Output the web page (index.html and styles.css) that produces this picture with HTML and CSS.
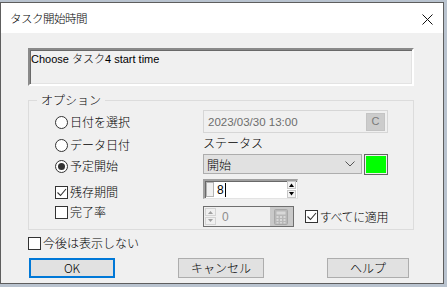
FILE: index.html
```html
<!DOCTYPE html>
<html lang="ja">
<head>
  <meta charset="UTF-8" />
  <title>タスク開始時間</title>
  <link rel="stylesheet" href="styles.css">
</head>
<body>

  <div class="window">
    <div class="titlebar">
      <span class="title">タスク開始時間</span>
      <svg class="close" width="11" height="11" viewBox="0 0 11 11">
        <path d="M0.5 0.5 L10.5 10.5 M10.5 0.5 L0.5 10.5" stroke="#111" stroke-width="1" fill="none" />
      </svg>
    </div>

    <div class="content">
      <div class="message">Choose タスク4 start time</div>

      <div class="group">
        <span class="legend">オプション</span>

        <div class="col-left">
          <div class="opt r1"><span class="radio"></span>日付を選択</div>
          <div class="opt r2"><span class="radio"></span>データ日付</div>
          <div class="opt r3"><span class="radio checked"></span>予定開始</div>
          <div class="opt r4">
            <span class="check">
              <svg width="11" height="11" viewBox="0 0 11 11"><path d="M1.5 5.5 L4.5 8.5 L10 2" stroke="#333" stroke-width="1.1" fill="none" /></svg>
            </span>残存期間
          </div>
          <div class="opt r5"><span class="check"></span>完了率</div>
        </div>

        <div class="col-right">
          <div class="date-field">
            <span class="date-text">2023/03/30 13:00</span>
            <span class="date-btn">C</span>
          </div>

          <div class="status-label">ステータス</div>

          <div class="status-row">
            <div class="select">
              <span>開始</span>
              <svg width="10" height="6" viewBox="0 0 10 6"><path d="M0.5 0.5 L5 5 L9.5 0.5" stroke="#555" fill="none" /></svg>
            </div>
            <div class="swatch"><div class="swatch-fill"></div></div>
          </div>

          <div class="spin">
            <span class="spin-handle"></span>
            <span class="spin-value">8<span class="caret"></span></span>
            <span class="spin-arrows">
              <svg width="9" height="17" viewBox="0 0 9 17">
                <rect x="0.5" y="0.5" width="8" height="7" fill="#f4f4f4" stroke="#c8c8c8" />
                <rect x="0.5" y="9.5" width="8" height="7" fill="#f4f4f4" stroke="#c8c8c8" />
                <path d="M2 6 L4.5 2.5 L7 6 Z" fill="#000" />
                <path d="M2 11 L4.5 14.5 L7 11 Z" fill="#000" />
              </svg>
            </span>
          </div>

          <div class="last-row">
            <div class="spin disabled">
              <span class="mini-arrows">
                <svg width="11" height="17" viewBox="0 0 11 17">
                  <rect x="0.5" y="0.5" width="10" height="7" fill="#f0f0f0" stroke="#d4d4d4" />
                  <rect x="0.5" y="9.5" width="10" height="7" fill="#f0f0f0" stroke="#d4d4d4" />
                  <path d="M3 6 L5.5 3 L8 6 Z" fill="#a0a0a0" />
                  <path d="M3 11 L5.5 14 L8 11 Z" fill="#a0a0a0" />
                </svg>
              </span>
              <span class="spin-value grey">0</span>
              <span class="calc">
                <svg width="14" height="16" viewBox="0 0 14 16">
                  <rect x="0.5" y="0.5" width="13" height="15" rx="1" fill="#b8b8b8" stroke="#a8a8a8" />
                  <rect x="2.5" y="2.5" width="9" height="3" fill="#d8d8d8" />
                  <g fill="#d8d8d8">
                    <rect x="2.5" y="7" width="2" height="2" /><rect x="6" y="7" width="2" height="2" /><rect x="9.5" y="7" width="2" height="2" />
                    <rect x="2.5" y="10" width="2" height="2" /><rect x="6" y="10" width="2" height="2" /><rect x="9.5" y="10" width="2" height="2" />
                    <rect x="2.5" y="13" width="2" height="1.5" /><rect x="6" y="13" width="2" height="1.5" /><rect x="9.5" y="13" width="2" height="1.5" />
                  </g>
                </svg>
              </span>
            </div>
            <div class="opt apply">
              <span class="check">
                <svg width="11" height="11" viewBox="0 0 11 11"><path d="M1.5 5.5 L4.5 8.5 L10 2" stroke="#333" stroke-width="1.1" fill="none" /></svg>
              </span>すべてに適用
            </div>
          </div>
        </div>
      </div>

      <div class="opt dont-show"><span class="check"></span>今後は表示しない</div>

      <div class="buttons">
        <button class="btn default">OK</button>
        <button class="btn">キャンセル</button>
        <button class="btn help">ヘルプ</button>
      </div>
    </div>
  </div>

</body>
</html>
```

FILE: styles.css
```css
* {
  box-sizing: border-box;
}

body {
  margin: 0;
  background-color: #b9c3cf;
  font-family: "Noto Sans CJK JP", sans-serif;
  font-size: 12px;
  font-weight: 300;
  color: #000;
  height: 287px;
  overflow: hidden;
}

.window {
  margin-top: 2px;
  width: 444px;
  height: 282px;
  border: 1px solid #5e5e5e;
  background-color: #f0f0f0;
}

.titlebar {
  height: 30px;
  background-color: #fff;
  display: flex;
  align-items: center;
  justify-content: space-between;
  padding: 0 10px 0 9px;
}

.title {
  font-size: 11.5px;
  color: #000;
  letter-spacing: -0.5px;
}

.close {
  margin-top: 2px;
}

.content {
  padding: 15px 0 0 27px;
}

.message {
  width: 386px;
  height: 38px;
  border-top: 2px solid #8a8a8a;
  border-left: 2px solid #8a8a8a;
  border-right: 2px solid #fff;
  border-bottom: 2px solid #fff;
  box-shadow: inset 1px 1px 0 #696969, inset -1px -1px 0 #e3e3e3;
  padding: 1px 0 0 1px;
  font-family: "Liberation Sans", "Noto Sans CJK JP", sans-serif;
  font-size: 11px;
  font-weight: 300;
  line-height: 16px;
}

.group {
  position: relative;
  margin-top: 14px;
  width: 386px;
  height: 130px;
  border: 1px solid #dcdcdc;
  padding-top: 9px;
  display: flex;
}

.legend {
  position: absolute;
  top: -9px;
  left: 8px;
  padding: 0 4px;
  background-color: #f0f0f0;
  line-height: 16px;
}

.col-left {
  width: 174px;
  padding: 4px 0 0 26px;
  display: flex;
  flex-direction: column;
}

.opt {
  display: flex;
  align-items: center;
  height: 16px;
  line-height: 16px;
  white-space: nowrap;
}

.r2 { margin-top: 7px; }
.r3 { margin-top: 5px; }
.r4 { margin-top: 10px; }
.r5 { margin-top: 4px; }

.radio {
  width: 13px;
  height: 13px;
  border: 1px solid #333;
  border-radius: 50%;
  background-color: #fff;
  margin-right: 2px;
  display: flex;
  align-items: center;
  justify-content: center;
}

.radio.checked::after {
  content: "";
  width: 7px;
  height: 7px;
  border-radius: 50%;
  background-color: #333;
}

.check {
  width: 13px;
  height: 13px;
  border: 1px solid #333;
  background-color: #fff;
  margin-right: 2px;
  display: flex;
  align-items: center;
  justify-content: center;
}

.col-right {
  width: 185px;
  display: flex;
  flex-direction: column;
}

.date-field {
  height: 23px;
  border: 1px solid #d6d6d6;
  display: flex;
  align-items: center;
  justify-content: space-between;
  padding: 0 2px 0 4px;
}

.date-text {
  font-family: "Liberation Sans", sans-serif;
  font-weight: 400;
  color: #6d6d6d;
  font-size: 11.5px;
}

.date-btn {
  width: 19px;
  height: 18px;
  background-color: #cccccc;
  border: 1px solid #c4c4c4;
  color: #7a7a7a;
  font-family: "Liberation Sans", sans-serif;
  font-weight: 400;
  font-size: 11px;
  text-align: center;
  line-height: 14px;
}

.status-label {
  margin-top: 2px;
  line-height: 16px;
}

.status-row {
  margin-top: 3px;
  display: flex;
  justify-content: space-between;
}

.select {
  width: 159px;
  height: 20px;
  background-color: #e1e1e1;
  border: 1px solid #adadad;
  display: flex;
  align-items: center;
  justify-content: space-between;
  padding: 0 6px 0 3px;
}

.swatch {
  width: 24px;
  height: 21px;
  border: 1px solid #646464;
  padding: 1px;
  background-color: #f0f0f0;
}

.swatch-fill {
  width: 100%;
  height: 100%;
  background-color: #00ff00;
}

.spin {
  margin-top: 4px;
  width: 95px;
  height: 20px;
  border-top: 2px solid #a0a0a0;
  border-left: 2px solid #a0a0a0;
  border-right: 1px solid #e3e3e3;
  border-bottom: 1px solid #e3e3e3;
  box-shadow: inset 1px 1px 0 #696969;
  background-color: #fff;
  display: flex;
  align-items: center;
}

.spin-handle {
  width: 8px;
  height: 15px;
  margin-left: 1px;
  background-color: #f0f0f0;
  border: 1px solid #b4b4b4;
}

.spin-value {
  flex: 1;
  padding-left: 3px;
  font-family: "Liberation Sans", sans-serif;
  font-weight: 400;
  font-size: 12px;
  display: flex;
  align-items: center;
}

.spin-value.grey {
  color: #8d8d8d;
  padding-left: 6px;
}

.caret {
  width: 1px;
  height: 14px;
  background-color: #000;
  margin-left: 1px;
}

.spin-arrows {
  display: flex;
  margin-right: 1px;
}

.last-row {
  margin-top: 7px;
  display: flex;
  align-items: center;
}

.spin.disabled {
  margin-top: 0;
  height: 21px;
  border: 1px solid #6f6f6f;
  box-shadow: none;
  background-color: #f0f0f0;
  padding-left: 1px;
}

.mini-arrows {
  display: flex;
}

.calc {
  width: 23px;
  height: 19px;
  background-color: #c9c9c9;
  display: flex;
  align-items: center;
  justify-content: center;
}

.apply {
  margin-left: 11px;
  letter-spacing: -0.4px;
}

.dont-show {
  margin-top: 6px;
  height: 14px;
}

.buttons {
  margin-top: 8px;
  width: 381px;
  padding-left: 1px;
  display: flex;
  justify-content: space-between;
}

.btn {
  width: 86px;
  height: 20px;
  background-color: #e1e1e1;
  border: 1px solid #adadad;
  font-family: "Noto Sans CJK JP", sans-serif;
  font-weight: 300;
  font-size: 12px;
  color: #000;
  padding: 0;
  line-height: 16px;
}

.btn.default {
  border: 2px solid #0078d7;
}

.btn.help {
  width: 82px;
}
```
